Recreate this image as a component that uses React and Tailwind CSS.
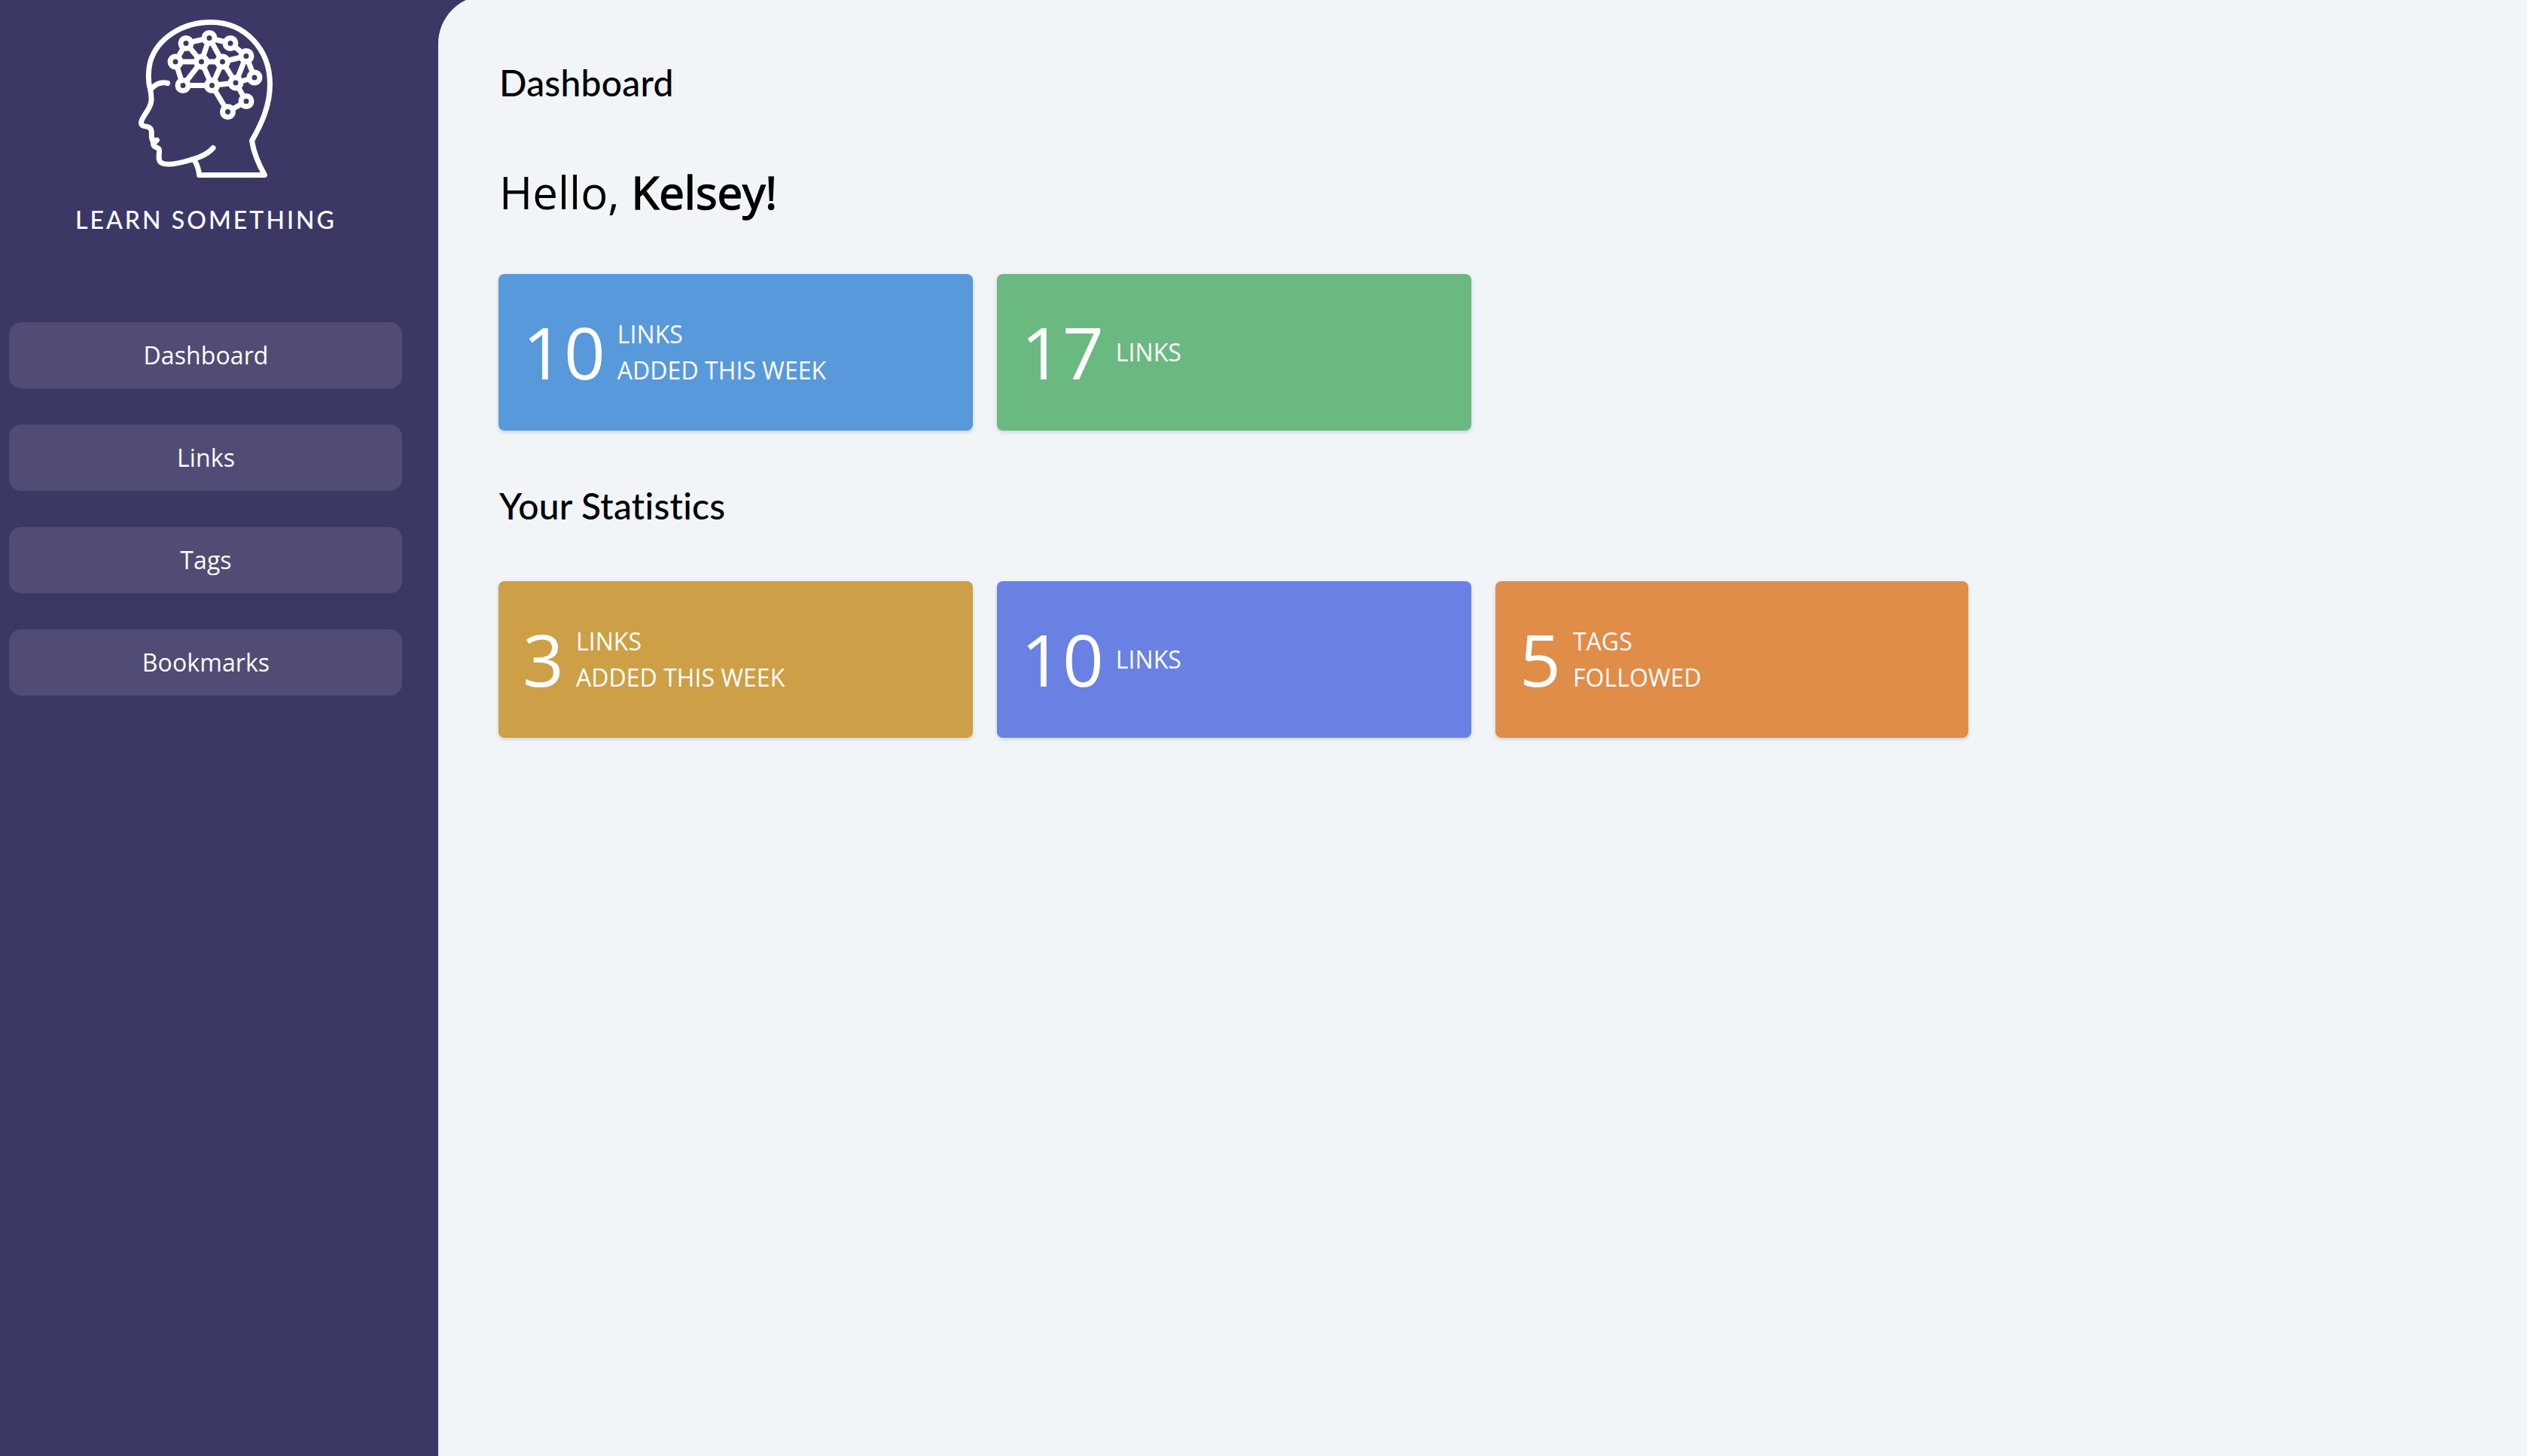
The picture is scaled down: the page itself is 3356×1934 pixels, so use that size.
const nodes = {
  a: [87, 47.5], b: [118, 40.5], c: [146, 47.5], d: [167, 64.5], e: [73, 72],
  f: [107.5, 72], g: [135.5, 72], h: [178, 93], i: [83, 103.5], j: [121.5, 103.5],
  k: [153, 100], l: [167, 124.5], m: [142.5, 138.5],
};

const edges = ["ab", "bc", "cd", "dh", "ae", "af", "bf", "bg", "ef", "fg", "gd", "ei", "fi", "fj", "gj", "gk", "dk", "kh", "ij", "jk", "kl", "lm", "jm"];

function Logo() {
  return (
    <svg className="mr-[6px] h-[240px] w-[220px]" viewBox="0 0 220 240" fill="none" stroke="white" strokeWidth="7" strokeLinecap="round" strokeLinejoin="round">
      <path d="M39.500 109C36 96 37 83 39.500 72C49 41 82 19.500 120 19.500C165 19.500 198.500 55 198.500 102C198.500 131 187 155 174.500 177C177 193 185 211 191.500 222.500H104.500C104.500 217 101.500 208 98.500 203.500" />
      <path d="M39.500 107C41 119 42.500 125 38 133C34 141 28 147 27.500 152.500C27 160 37 156 40 161C43 165 39.500 172 43 177.500L48.500 176L43.500 181C44 188 51.500 184 51.500 190C51.500 197 49.500 203 54 206C61 211 78 207 93 202.500C106 199 116 195 123 186.500" />
      <path d="M40.500 108C47 101.500 55 98.500 62.500 100.500" />
      {edges.map((edge) => {
        const [x1, y1] = nodes[edge[0]];
        const [x2, y2] = nodes[edge[1]];
        return <line key={edge} x1={x1} y1={y1} x2={x2} y2={y2} />;
      })}
      {Object.entries(nodes).map(([key, [cx, cy]]) => (
        <circle key={key} cx={cx} cy={cy} r="7" fill="#3c3866" />
      ))}
    </svg>
  );
}

function StatCard({ value, lines, color }) {
  return (
    <div className={`flex h-52 items-center rounded-lg px-8 text-white shadow-[0_2px_6px_rgba(0,0,0,0.1),0_2px_4px_rgba(0,0,0,0.06)] ${color}`}>
      <div className="pb-[3px] text-[96px] leading-none">{value}</div>
      <div className="ml-4 text-[32px] leading-[48px] tracking-[0.05px] uppercase">
        {lines.map((line) => (
          <div key={line}>{line}</div>
        ))}
      </div>
    </div>
  );
}

export default function App() {
  return (
    <div className="flex h-[1934px] w-[3356px] overflow-hidden bg-[#3c3866] font-['Open_Sans',sans-serif] text-black">
      <aside className="flex w-[582px] shrink-0 flex-col pr-12 pl-3 text-white">
        <div className="flex flex-col items-center pt-[10px]">
          <Logo />
          <div className="mt-[18px] pl-px font-['Lato',sans-serif] text-[32px] leading-[48px] font-medium tracking-[3.05px]">LEARN SOMETHING</div>
        </div>
        <nav className="mt-28 flex flex-col gap-12">
          {["Dashboard", "Links", "Tags", "Bookmarks"].map((label) => (
            <a key={label} className="flex h-[88px] items-center justify-center rounded-2xl bg-[#504c76] pl-px text-[32px] tracking-[0.1px]">{label}</a>
          ))}
        </nav>
      </aside>
      <main className="-mt-1.5 flex-1 rounded-tl-[64px] bg-[#f1f5f8] pl-20">
        <h1 className="mt-[80px] pl-px font-['Lato',sans-serif] text-[48px] leading-[72px] font-medium tracking-[0.25px]">Dashboard</h1>
        <p className="mt-[64px] pl-px text-[60px] leading-[90px]">
          Hello, <span className="[-webkit-text-stroke:1.6px_black]">Kelsey!</span>
        </p>
        <section className="mt-[64px] grid grid-cols-[630px_630px_628px] gap-8">
          <StatCard value="10" lines={["Links", "added this week"]} color="bg-[#5899db]" />
          <StatCard value="17" lines={["Links"]} color="bg-[#6ab980]" />
        </section>
        <h2 className="mt-16 pl-px font-['Lato',sans-serif] text-[48px] leading-[72px] font-medium tracking-[0.25px] [font-variant-ligatures:none]">Your Statistics</h2>
        <section className="mt-16 grid grid-cols-[630px_630px_628px] gap-8">
          <StatCard value="3" lines={["Links", "added this week"]} color="bg-[#cd9f46]" />
          <StatCard value="10" lines={["Links"]} color="bg-[#6981e2]" />
          <StatCard value="5" lines={["Tags", "followed"]} color="bg-[#df8d49]" />
        </section>
      </main>
    </div>
  );
}
